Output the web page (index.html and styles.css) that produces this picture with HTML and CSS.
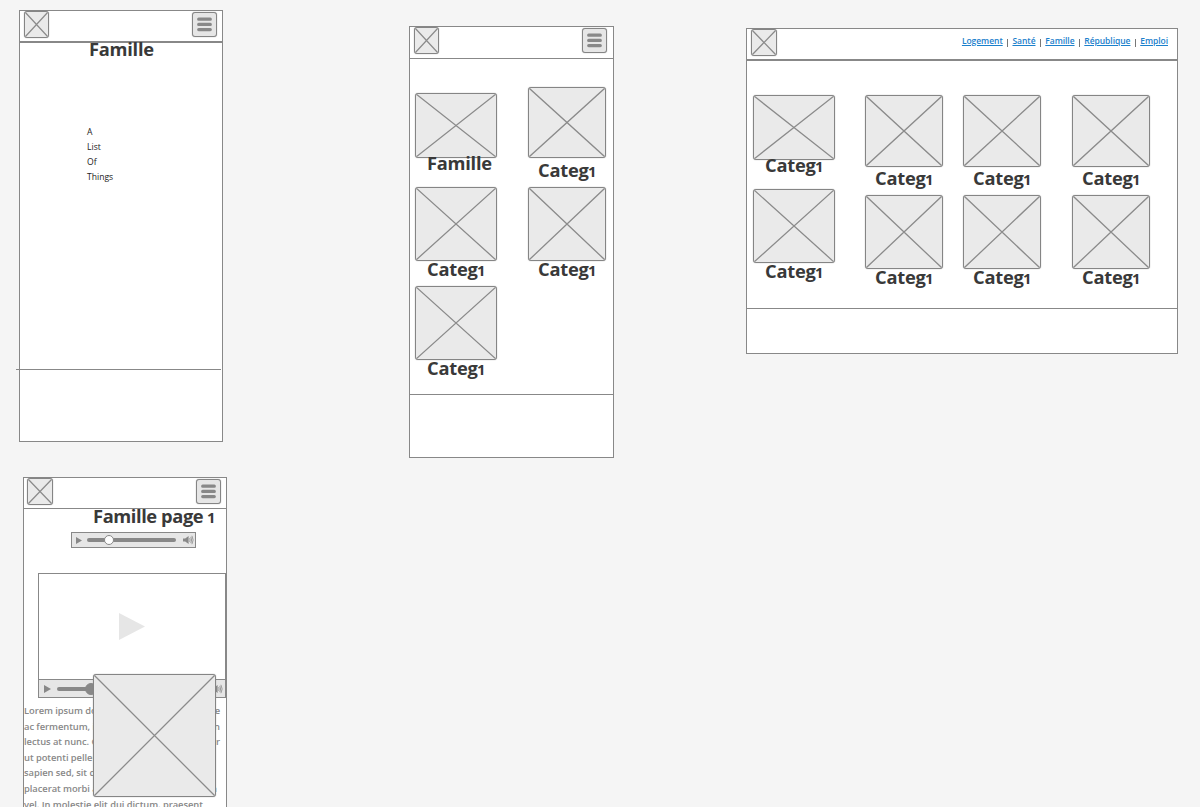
FILE: index.html
```html
<!DOCTYPE html>
<html lang="fr">
<head>
<meta charset="utf-8">
<title>Wireframes</title>
<link rel="stylesheet" href="styles.css">
</head>
<body>
<svg class="defs" width="0" height="0">
  <symbol id="cross" viewBox="0 0 100 100" preserveAspectRatio="none"><path d="M0 0L100 100M100 0L0 100" fill="none" stroke="#8b8b8b" stroke-width="1.3" vector-effect="non-scaling-stroke"/></symbol>
  <symbol id="menu" viewBox="0 0 25 25"><path d="M6.7 7.2H18.3M6.7 12.4H18.3M6.7 17.6H18.3" stroke="#888" stroke-width="3.2" stroke-linecap="round"/></symbol>
  <symbol id="play" viewBox="0 0 10 10" preserveAspectRatio="none"><path d="M0 0L10 5L0 10Z" fill="currentColor"/></symbol>
  <symbol id="sound" viewBox="0 0 11 10"><path d="M0 3.4H2.2L5.6 1V9L2.2 6.6H0Z" fill="#888"/><path d="M6.6 3.2Q7.7 5 6.6 6.8M7.8 1.9Q9.4 5 7.8 8.1M8.9 .8Q11.4 5 8.9 9.2" fill="none" stroke="#888" stroke-width=".8"/></symbol>
</svg>
<main class="board">

  <section class="frame frame-list">
    <header class="bar bar-thick"><div class="image logo"><svg><use href="#cross"/></svg></div><div class="menu"><svg><use href="#menu"/></svg></div></header>
    <h1 class="title">Famille</h1>
    <ul class="list"><li>A</li><li>List</li><li>Of</li><li>Things</li></ul>
    <footer class="footer"></footer>
  </section>

  <section class="frame frame-mobile">
    <header class="bar"><div class="image logo"><svg><use href="#cross"/></svg></div><div class="menu"><svg><use href="#menu"/></svg></div></header>
    <div class="cards">
      <div class="column wide">
        <div class="image short"><svg><use href="#cross"/></svg></div><h2 class="label raised">Famille</h2>
        <div class="image"><svg><use href="#cross"/></svg></div><h2 class="label">Categ<span class="num">1</span></h2>
        <div class="image"><svg><use href="#cross"/></svg></div><h2 class="label">Categ<span class="num">1</span></h2>
      </div>
      <div class="column">
        <div class="image medium"><svg><use href="#cross"/></svg></div><h2 class="label lowered">Categ<span class="num">1</span></h2>
        <div class="image"><svg><use href="#cross"/></svg></div><h2 class="label">Categ<span class="num">1</span></h2>
      </div>
    </div>
    <footer class="footer"></footer>
  </section>

  <section class="frame frame-desktop">
    <header class="bar bar-thick"><div class="image logo"><svg><use href="#cross"/></svg></div>
      <nav class="nav"><a>Logement</a><i></i><a>Santé</a><i></i><a>Famille</a><i></i><a>République</a><i></i><a>Emploi</a></nav></header>
    <div class="cards">
      <div class="column wide">
        <div class="image short"><svg><use href="#cross"/></svg></div><h2 class="label raised">Categ<span class="num">1</span></h2>
        <div class="image"><svg><use href="#cross"/></svg></div><h2 class="label">Categ<span class="num">1</span></h2>
      </div>
      <div class="column">
        <div class="image medium"><svg><use href="#cross"/></svg></div><h2 class="label lowered">Categ<span class="num">1</span></h2>
        <div class="image"><svg><use href="#cross"/></svg></div><h2 class="label">Categ<span class="num">1</span></h2>
      </div>
      <div class="column">
        <div class="image medium"><svg><use href="#cross"/></svg></div><h2 class="label lowered">Categ<span class="num">1</span></h2>
        <div class="image"><svg><use href="#cross"/></svg></div><h2 class="label">Categ<span class="num">1</span></h2>
      </div>
      <div class="column">
        <div class="image medium"><svg><use href="#cross"/></svg></div><h2 class="label lowered">Categ<span class="num">1</span></h2>
        <div class="image"><svg><use href="#cross"/></svg></div><h2 class="label">Categ<span class="num">1</span></h2>
      </div>
    </div>
    <footer class="footer"></footer>
  </section>

  <section class="frame frame-page">
    <header class="bar"><div class="image logo"><svg><use href="#cross"/></svg></div><div class="menu"><svg><use href="#menu"/></svg></div></header>
    <h1 class="title">Famille page <span class="num">1</span></h1>
    <div class="player audio"><svg class="start"><use href="#play"/></svg><div class="track"><b class="knob"></b></div><svg class="sound"><use href="#sound"/></svg></div>
    <div class="video">
      <div class="screen"><svg class="big"><use href="#play"/></svg></div>
      <div class="player"><svg class="start"><use href="#play"/></svg><div class="track"><b class="knob dark"></b></div><svg class="sound"><use href="#sound"/></svg></div>
    </div>
    <div class="copy">
      <p><span>Lorem ipsum dolor sit</span><span>vitae</span></p>
      <p><span>ac fermentum, in nulla</span><span>proin</span></p>
      <p><span>lectus at nunc. Cras id</span><span>tempor</span></p>
      <p><span>ut potenti pellentesque nec</span></p>
      <p><span>sapien sed, sit diam nulla</span></p>
      <p class="short-line"><span>placerat morbi a ligula</span><span>urna</span></p>
      <p><span>vel. In molestie elit dui dictum, praesent</span></p>
    </div>
    <div class="image overlay"><svg><use href="#cross"/></svg></div>
  </section>
</main>
</body>
</html>
```
FILE: styles.css
```css
* { box-sizing: border-box; }
body { margin: 0; background: #f5f5f5; font-family: "Open Sans", sans-serif; color: #393939; }
svg { display: block; }
h1, h2, p, ul { margin: 0; padding: 0; }
.defs { position: absolute; }
.board { position: relative; width: 1200px; height: 807px; overflow: hidden; }

.frame { position: absolute; display: flex; flex-direction: column; background: #fff; border: 1px solid #888; }
.frame-list { left: 19px; top: 10px; width: 204px; height: 432px; }
.frame-mobile { left: 409px; top: 26px; width: 205px; height: 432px; }
.frame-desktop { left: 746px; top: 28px; width: 432px; height: 326px; }
.frame-page { left: 23px; top: 477px; width: 204px; height: 432px; }

.bar { display: flex; flex: none; justify-content: space-between; align-items: flex-start; height: 32px; padding: 0 5px 0 4px; border-bottom: 1px solid #888; }
.bar-thick { border-bottom-width: 2px; }
.frame-mobile .bar { padding-right: 6px; }
.frame-page .bar { height: 31px; padding-left: 3px; }

.image { flex: none; background: #eaeaea; border: 1px solid #858585; border-radius: 3px; box-shadow: 0 0 1px #888; overflow: hidden; }
.image svg { width: 100%; height: 100%; }
.logo { width: 26px; height: 27px; }
.frame-list .logo, .frame-mobile .logo { width: 25px; }
.menu { width: 25px; height: 25px; margin-top: 1px; background: #e6e6e6; border: 1px solid #858585; border-radius: 3px; box-shadow: 0 0 1px #888; }
.menu svg { width: 25px; height: 25px; margin: -1px; }

.title, .label { flex: none; height: 20px; font-size: 18.3px; font-weight: 700; letter-spacing: -.25px; line-height: 20px; white-space: nowrap; }
.num { margin-left: -.5px; font-size: 14.8px; line-height: 1px; }
.frame-list .title { margin: -4px 0 0 69px; }
.frame-page .title { margin: -3px 0 0 69px; letter-spacing: -.4px; }

.list { margin: 66px 0 0 67px; list-style: none; font-size: 8.6px; line-height: 15px; color: #222; }
.footer { margin-top: auto; border-top: 1px solid #888; }
.frame-list .footer { width: 205px; height: 72px; margin-left: -4px; }
.frame-mobile .footer { height: 63px; }
.frame-desktop .footer { height: 45px; }

.cards { display: flex; }
.frame-mobile .cards { padding: 28px 0 0 5px; gap: 31px; }
.frame-desktop .cards { padding: 34px 0 0 6px; }
.frame-desktop .column:nth-child(2) { margin-left: 30px; }
.frame-desktop .column:nth-child(3) { margin-left: 20px; }
.frame-desktop .column:nth-child(4) { margin-left: 31px; }
.column { width: 78px; }
.column.wide { width: 82px; }
.frame-mobile .wide { padding-top: 6px; }
.column .image { height: 74px; }
.column .short { height: 65px; }
.column .medium { height: 72px; }
.label { margin: -2px 0 7px 10px; }
.wide .label { margin-left: 12px; }
.label.raised { margin-top: -5px; margin-bottom: 14px; }
.label.lowered { margin-top: 1px; }
.frame-mobile .label.lowered { margin-top: 2px; }
.frame-mobile .medium { height: 71px; }

.nav { display: flex; align-items: center; margin: 6px 4px 0 0; color: #1b80cc; font-size: 8.5px; font-weight: 600; letter-spacing: -.05px; line-height: 12px; }
.nav a { text-decoration: underline; }
.nav i { width: 1px; height: 8px; margin: 3px 4.4px 0; background: #777; }

.player { display: flex; align-items: center; background: #e6e6e6; border: 1px solid #888; color: #888; }
.audio { width: 125px; height: 16px; flex: none; margin: 6px 0 0 47px; padding: 0 1px 0 4px; }
.start { width: 6px; height: 7px; flex: none; }
.track { position: relative; flex: 1; height: 4px; margin: 0 7px 0 5px; background: #888; border-radius: 2px; }
.knob { position: absolute; left: 17px; top: -3px; width: 10px; height: 10px; background: #fff; border: 1px solid #888; border-radius: 50%; }
.sound { width: 11px; height: 10px; flex: none; }
.video { flex: none; width: 188px; height: 125px; margin: 25px 0 0 14px; border: 1px solid #888; }
.screen { display: flex; height: 105px; }
.big { width: 26px; height: 27px; margin: 39px 0 0 80px; color: #e6e6e6; }
.video .player { height: 18px; border-width: 1px 0 0; padding: 0 2px 0 5px; }
.video .start { width: 7px; height: 8px; }
.video .track { margin-left: 6px; }
.knob.dark { left: 28px; top: -4px; width: 12px; height: 12px; background: #888; }

.copy { width: 196px; margin-top: 5px; color: #888; font-size: 9.4px; font-weight: 600; letter-spacing: -.06px; line-height: 15.6px; }
.copy p { display: flex; justify-content: space-between; white-space: nowrap; }
.copy .short-line { width: 193px; }
.overlay { position: absolute; left: 69px; top: 196px; width: 123px; height: 123px; }
```
